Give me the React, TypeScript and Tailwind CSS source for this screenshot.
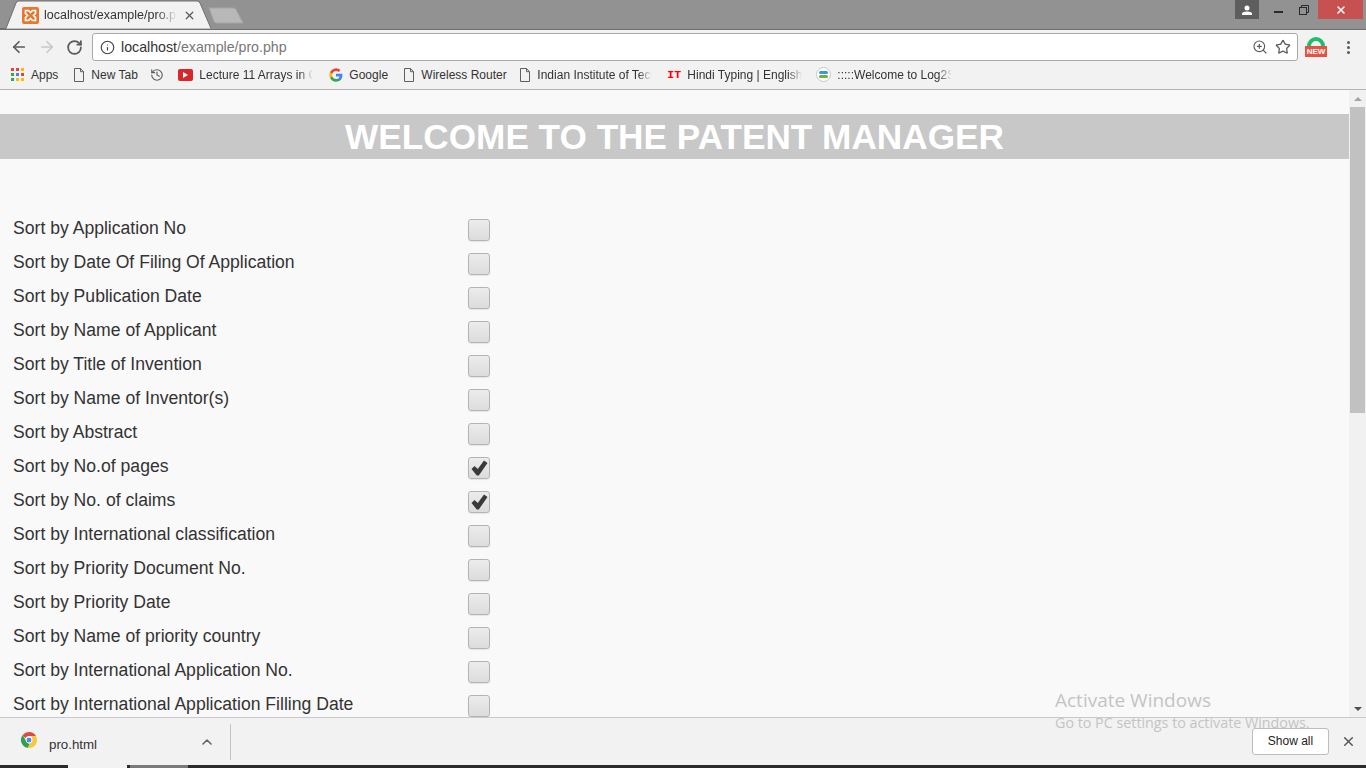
import { ArrowLeft, ArrowRight, RotateCw, Info, ZoomIn, Star, History, X, ChevronUp } from 'lucide-react';

const sortRows = [
    { label: 'Sort by Application No', checked: false },
    { label: 'Sort by Date Of Filing Of Application', checked: false },
    { label: 'Sort by Publication Date', checked: false },
    { label: 'Sort by Name of Applicant', checked: false },
    { label: 'Sort by Title of Invention', checked: false },
    { label: 'Sort by Name of Inventor(s)', checked: false },
    { label: 'Sort by Abstract', checked: false },
    { label: 'Sort by No.of pages', checked: true },
    { label: 'Sort by No. of claims', checked: true },
    { label: 'Sort by International classification', checked: false },
    { label: 'Sort by Priority Document No.', checked: false },
    { label: 'Sort by Priority Date', checked: false },
    { label: 'Sort by Name of priority country', checked: false },
    { label: 'Sort by International Application No.', checked: false },
    { label: 'Sort by International Application Filling Date', checked: false },
];

function PageIcon() {
    return (
        <svg width="12" height="14" viewBox="0 0 12 14" fill="none" stroke="#5f5f5f" strokeWidth="1" className="shrink-0">
            <path d="M1.5 .5h6l3 3.2v9.8h-9z" />
            <path d="M7.5 .5v3.2h3" />
        </svg>
    );
}

function ChromeLogo() {
    return (
        <svg width="16" height="16" viewBox="0 0 16 16" className="shrink-0">
            <path d="M8 0a8 8 0 0 1 7 4.1H8a4 4 0 0 0-3.6 2.2L1.700 3A8 8 0 0 1 8 0z" fill="#dd4b3e" />
            <path d="M1.700 3l3.500 6.100a3.600 3.600 0 0 0 3.700 2.700L6.600 15.900A8 8 0 0 1 1.700 3z" fill="#2fa04d" />
            <path d="M15 4.100A8 8 0 0 1 6.600 15.900l3.400-5.900a4 4 0 0 0 0-5.900z" fill="#f5c93d" />
            <circle cx="8" cy="8" r="3" fill="#4a8af4" stroke="#fff" strokeWidth="1" />
        </svg>
    );
}

// fade=true for the long titles Chrome cuts off with a gradient
function Bookmark({ icon, label, width, fade }: { icon: React.ReactNode; label: string; width: string; fade?: boolean }) {
    return (
        <div className="flex items-center gap-[6px] shrink-0">
            {icon}
            <span
                className={`overflow-hidden whitespace-nowrap text-[12px] text-[#333] ${width} ${
                    fade ? '[mask-image:linear-gradient(to_right,black_88%,transparent)]' : ''
                }`}
            >
                {label}
            </span>
        </div>
    );
}

function CheckBox({ checked }: { checked: boolean }) {
    return (
        <div className="w-[22px] h-[22px] rounded-[3px] border border-[#b4b4b4] bg-gradient-to-b from-[#ececec] to-[#dcdcdc] flex items-center justify-center shadow-[0_1px_1px_rgba(0,0,0,0.08)]">
            {checked && (
                <svg width="17" height="16" viewBox="0 0 17 16">
                    <path d="M.5 9l3-3 3.300 3L13 .5l3.500 2.500L7.800 15.500h-2z" fill="#3a3a3a" />
                </svg>
            )}
        </div>
    );
}

export default function App() {
    return (
        <div className="relative w-[1366px] h-[768px] overflow-hidden bg-[#f2f2f2] font-['Liberation_Sans',Arial,sans-serif]">
            {/* title bar */}
            <div className="relative h-[29px] bg-[#929292] flex justify-end">
                <svg width="250" height="29" viewBox="0 0 250 29" className="absolute left-0 top-0">
                    <path d="M209 8h24q2 0 3 1.500l7 13.500h-26q-2 0-3-1.500z" fill="#b8b8b8" stroke="#a5a5a5" strokeWidth="1" />
                    <path d="M0 28.500h6L16 3q1-2 3-2h178q2 0 3 2l11 25.500" fill="#f2f2f2" stroke="#6f6f6f" strokeWidth="1" />
                </svg>
                <div className="absolute left-[22px] top-[7px] w-[17px] h-[17px] rounded-[2px] bg-[#e8762d] flex items-center justify-center">
                    <svg width="13" height="13" viewBox="0 0 13 13" fill="none" stroke="#fff" strokeWidth="1.700">
                        <path d="M1.500 1.500h3l2 2 2-2h3v3l-2 2 2 2v3h-3l-2-2-2 2h-3v-3l2-2-2-2z" />
                    </svg>
                </div>
                <span className="absolute left-[44px] top-[7px] w-[133px] overflow-hidden whitespace-nowrap text-[12.500px] leading-[16px] text-[#333] [mask-image:linear-gradient(to_right,black_85%,transparent)]">
                    localhost/example/pro.php
                </span>
                <X size={13} strokeWidth={2.400} className="absolute left-[183px] top-[9px] text-[#5a5a5a]" />
                <div className="flex h-[19px] items-center mr-[3px]">
                    <div className="w-[24px] h-[19px] bg-[#5e5e5e] flex items-center justify-center">
                        <svg width="10" height="10" viewBox="0 0 10 10" fill="#fff">
                            <circle cx="5" cy="3" r="2.500" />
                            <path d="M0 10V8.500q0-1.500 5-2 5 .5 5 2V10z" />
                        </svg>
                    </div>
                    <span className="ml-[15px] mt-[4px] w-[9px] h-[2px] bg-[#2a2a2a]"></span>
                    <svg width="10" height="10" viewBox="0 0 10 10" fill="none" stroke="#2a2a2a" strokeWidth="1" className="ml-[16px] mr-[9px]">
                        <rect x=".5" y="2.500" width="7" height="7" />
                        <path d="M2.500 2.500v-2h7v7h-2" />
                    </svg>
                    <div className="w-[45px] h-[19px] bg-[#c75050] flex items-center justify-center">
                        <X size={12} strokeWidth={3} className="text-white" />
                    </div>
                </div>
            </div>

            {/* toolbar */}
            <div className="h-[35px] flex items-center pl-[10px] border-t border-[#6f6f6f]">
                <ArrowLeft size={18} strokeWidth={2.300} className="text-[#5a5a5a]" />
                <ArrowRight size={18} strokeWidth={2.300} className="text-[#c9c9c9] ml-[10px]" />
                <RotateCw size={17} strokeWidth={2.500} className="text-[#5a5a5a] ml-[10px]" />
                <div className="ml-[9px] w-[1206px] h-[28px] bg-white border border-[#a9a9a9] rounded-[3px] flex items-center pl-[7px] pr-[6px]">
                    <Info size={15} strokeWidth={1.900} className="text-[#444]" />
                    <span className="ml-[6px] mt-[1px] text-[14.200px] text-[#333]">
                        localhost<span className="text-[#777]">/example/pro.php</span>
                    </span>
                    <ZoomIn size={16} strokeWidth={1.700} className="ml-auto mr-[1px] text-[#5a5a5a]" />
                    <Star size={16} strokeWidth={1.900} className="ml-[6px] text-[#5a5a5a]" />
                </div>
                <div className="relative ml-[7px] w-[22px] h-[22px]">
                    <div className="absolute left-[2px] top-[1px] w-[18px] h-[18px] rounded-full border-[4px] border-[#1fbe6e]"></div>
                    <div className="absolute left-0 top-[10px] w-[22px] h-[11px] bg-[#e8503f] text-white text-[8px] leading-[11px] font-bold text-center">NEW</div>
                </div>
                <div className="ml-[20px] flex flex-col gap-[2px]">
                    <span className="w-[3px] h-[3px] bg-[#5a5a5a] rounded-full"></span>
                    <span className="w-[3px] h-[3px] bg-[#5a5a5a] rounded-full"></span>
                    <span className="w-[3px] h-[3px] bg-[#5a5a5a] rounded-full"></span>
                </div>
            </div>

            {/* bookmarks */}
            <div className="h-[26px] flex items-center pl-[11px] pb-[4px] border-b border-[#b4b4b4]">
                <div className="flex items-center gap-[7px] mr-[15px]">
                    <div className="grid grid-cols-3 gap-[2px] w-[13px]">
                        <span className="w-[3px] h-[3px] bg-[#ea4335]"></span>
                        <span className="w-[3px] h-[3px] bg-[#ea4335]"></span>
                        <span className="w-[3px] h-[3px] bg-[#fbbc05]"></span>
                        <span className="w-[3px] h-[3px] bg-[#34a853]"></span>
                        <span className="w-[3px] h-[3px] bg-[#4285f4]"></span>
                        <span className="w-[3px] h-[3px] bg-[#ea4335]"></span>
                        <span className="w-[3px] h-[3px] bg-[#34a853]"></span>
                        <span className="w-[3px] h-[3px] bg-[#fbbc05]"></span>
                        <span className="w-[3px] h-[3px] bg-[#fbbc05]"></span>
                    </div>
                    <span className="text-[12px] text-[#333]">Apps</span>
                </div>
                <Bookmark icon={<PageIcon />} label="New Tab" width="w-[48px]" />
                <History size={14} className="ml-[11px] mr-[14px] text-[#5f5f5f]" />
                <Bookmark
                    icon={
                        <div className="w-[15px] h-[12px] rounded-[2px] bg-[#d9262c] flex items-center justify-center">
                            <span className="border-l-[5px] border-l-white border-y-[3px] border-y-transparent"></span>
                        </div>
                    }
                    label="Lecture 11 Arrays in C"
                    width="w-[114px]"
                    fade
                />
                <div className="w-[16px]"></div>
                <Bookmark
                    icon={
                        <svg width="14" height="14" viewBox="0 0 24 24" className="shrink-0">
                            <path d="M23 12.300c0-.8-.1-1.600-.2-2.300H12v4.400h6.200a5.300 5.300 0 0 1-2.300 3.500v2.900h3.700c2.200-2 3.400-5 3.400-8.500z" fill="#4285f4" />
                            <path d="M12 23.500c3.100 0 5.700-1 7.600-2.800l-3.700-2.900c-1 .7-2.300 1.100-3.900 1.100-3 0-5.500-2-6.400-4.700H1.800v3A11.500 11.500 0 0 0 12 23.500z" fill="#34a853" />
                            <path d="M5.600 14.200a6.900 6.900 0 0 1 0-4.400v-3H1.800a11.500 11.500 0 0 0 0 10.400z" fill="#fbbc05" />
                            <path d="M12 5.100c1.700 0 3.200.6 4.400 1.700l3.300-3.300A11.500 11.500 0 0 0 1.800 6.800l3.800 3c.9-2.700 3.400-4.700 6.400-4.700z" fill="#ea4335" />
                        </svg>
                    }
                    label="Google"
                    width="w-[39px]"
                />
                <div className="w-[15px]"></div>
                <Bookmark icon={<PageIcon />} label="Wireless Router" width="w-[86px]" />
                <div className="w-[12px]"></div>
                <Bookmark icon={<PageIcon />} label="Indian Institute of Technology" width="w-[115px]" fade />
                <div className="w-[15px]"></div>
                <Bookmark
                    icon={<span className="w-[14px] font-['Liberation_Mono',monospace] font-bold text-[11.500px] leading-[14px] text-[#f00]">IT</span>}
                    label="Hindi Typing | English"
                    width="w-[115px]"
                    fade
                />
                <div className="w-[14px]"></div>
                <Bookmark
                    icon={
                        <div className="w-[15px] h-[15px] rounded-full border border-[#c8c8c8] bg-white flex flex-col items-center justify-center gap-[1px]">
                            <span className="w-[9px] h-[3px] bg-[#3a9ad9] rounded-full"></span>
                            <span className="w-[9px] h-[3px] bg-[#6cb33f] rounded-full"></span>
                        </div>
                    }
                    label=":::::Welcome to Log2Space"
                    width="w-[115px]"
                    fade
                />
            </div>

            {/* page */}
            <div className="h-[627px] flex bg-[#f9f9f9]">
                <div className="flex-1 overflow-hidden pt-[24px]">
                    <h1 className="h-[45px] bg-[#c8c8c8] text-center text-white font-bold text-[35.200px] leading-[46px]">
                        WELCOME TO THE PATENT MANAGER
                    </h1>
                    <div className="pt-[54px] pl-[13px]">
                        {sortRows.map((row) => (
                            <div key={row.label} className="h-[34px] flex items-start">
                                <span className="w-[455px] text-[17.600px] leading-[34px] -mt-[2px] text-[#333]">{row.label}</span>
                                <div className="mt-[6px]">
                                    <CheckBox checked={row.checked} />
                                </div>
                            </div>
                        ))}
                    </div>
                </div>
                <div className="w-[17px] bg-[#f1f1f1] flex flex-col items-center">
                    <div className="h-[17px] flex items-center justify-center">
                        <span className="border-b-[4px] border-b-[#a3a3a3] border-x-[4px] border-x-transparent"></span>
                    </div>
                    <div className="w-[15px] h-[306px] bg-[#c1c1c1]"></div>
                    <div className="mt-auto h-[17px] flex items-center justify-center">
                        <span className="border-t-[4px] border-t-[#505050] border-x-[4px] border-x-transparent"></span>
                    </div>
                </div>
            </div>

            {/* download shelf */}
            <div className="h-[48px] flex items-center border-t border-[#c9c9c9] bg-[#f2f2f2]">
                <div className="ml-[21px] -mt-[3px]">
                    <ChromeLogo />
                </div>
                <span className="ml-[12px] mt-[7px] text-[13.300px] text-[#333]">pro.html</span>
                <ChevronUp size={16} strokeWidth={2.400} className="ml-[102px] text-[#666]" />
                <div className="ml-[15px] w-px h-[36px] bg-[#c4c4c4]"></div>
                <button className="ml-auto -mt-[1px] w-[77px] h-[27px] rounded-[3px] border border-[#bdbdbd] bg-white text-[12px] text-[#222]">
                    Show all
                </button>
                <X size={15} strokeWidth={2.400} className="ml-[12px] mr-[10px] text-[#555]" />
            </div>
            <div className="h-[3px] bg-[#2b2b2b] flex">
                <div className="ml-[68px] w-[59px] bg-[#f2f2f2]"></div>
                <div className="ml-[3px] w-[58px] bg-[#7a7a7a]"></div>
            </div>

            {/* watermark */}
            <div className="absolute left-[1055px] top-[688px] pointer-events-none font-['Open_Sans',sans-serif] text-[#c4c4c4]">
                <div className="text-[19px] leading-[25px]">Activate Windows</div>
                <div className="text-[14.300px] leading-[20px]">Go to PC settings to activate Windows.</div>
            </div>
        </div>
    );
}
